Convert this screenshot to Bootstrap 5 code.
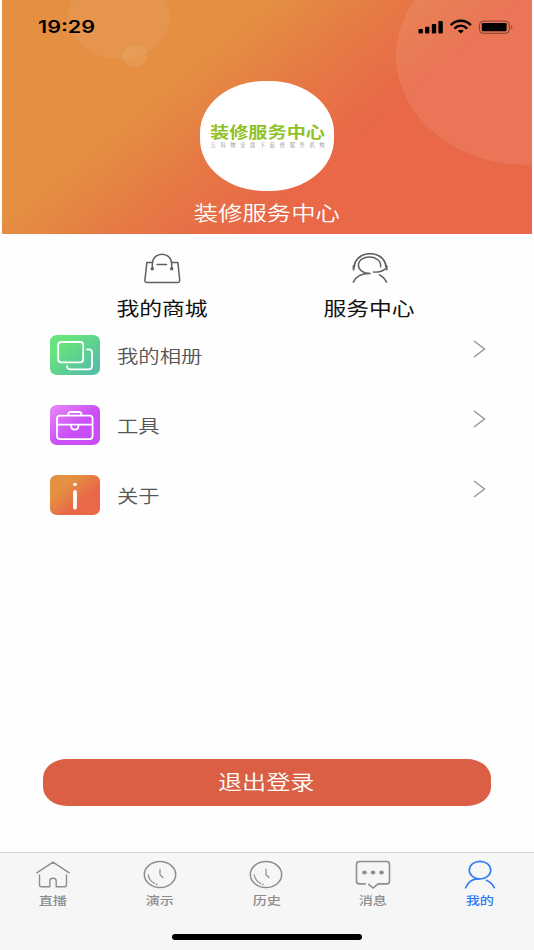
<!DOCTYPE html>
<html lang="zh-CN">
<head>
<meta charset="utf-8">
<meta name="viewport" content="width=device-width, initial-scale=1">
<title>我的</title>
<link href="https://cdn.jsdelivr.net/npm/bootstrap@5.3.0/dist/css/bootstrap.min.css" rel="stylesheet">
<style>
body{font-family:"Noto Sans CJK SC",sans-serif;background:#fefefe;height:950px;overflow:hidden}
svg{display:block;flex:none}
.wide{display:inline-block;transform:scaleX(1.2);line-height:1;white-space:nowrap}
.hero{height:234px;margin:0 2px;background:linear-gradient(140.2deg,#e48f42 33%,#e67a45 48%,#e86847 64%)}
.bubbles{left:0;top:0}
.statusbar{height:81px;padding:19px 18px 0 36px}
.clock{font:600 17px/17px Inter,sans-serif;color:#000;transform:scaleX(1.27);transform-origin:left}
.avatar{width:134px;height:110px;border-radius:64px/52px;background:#fff}
.username{font-size:20.3px;font-weight:350;margin-top:11px}
.quick{height:86px;padding:0 0 0 59px}
.quick-item{width:207px;padding-top:19px}
.quick-label{font-size:19px;color:#111;margin-top:14px}
.entry{height:70px;padding:0 48px 0 50px}
.tile{width:50px;height:40px;border-radius:7px/6px}
.tile-green{background:linear-gradient(140deg,#67e27c 25%,#56bfa6 85%)}
.tile-purple{background:linear-gradient(140deg,#e88af8,#c94ef6 55%)}
.tile-orange{background:linear-gradient(140deg,#e48f42 30%,#e86847 65%)}
.entry-label{font-size:17.8px;font-weight:350;color:#555;margin:1px 0 0 17px;transform-origin:left}
.chev{margin-bottom:12px}
.logout{height:47px;margin:0 43px 46px;border-radius:24px/19px;background:#da5f44;color:#fff;font-size:20.1px;font-weight:350}
.logout .wide{margin:3px 2px 0 0}
.logout:hover{background:#cf563c;color:#fff}
.tabs{height:98px;background:#f6f6f6;border-top:1px solid #d6d6d6}
.tab-link{width:106.6px;padding-top:6px;color:#8e8e8e;text-decoration:none}
.tab-link.on{color:#2f7cf6}
.tab-name{font-size:11.8px;font-weight:500;margin-top:4px}
.home-line{width:190px;height:6px;background:#000;margin-bottom:10px}
</style>
<script src="https://cdn.jsdelivr.net/npm/bootstrap@5.3.0/dist/js/bootstrap.bundle.min.js"></script>
</head>
<body class="d-flex flex-column">
<header class="hero position-relative overflow-hidden d-flex flex-column align-items-center">
  <svg class="bubbles position-absolute" width="530" height="234" fill="#fff"><ellipse cx="117" cy="17" rx="51" ry="42" fill-opacity=".06"/><ellipse cx="133" cy="56" rx="13" ry="11" fill-opacity=".08"/><ellipse cx="525" cy="56" rx="131" ry="109" fill-opacity=".09"/></svg>
  <div class="statusbar position-relative w-100 d-flex justify-content-between align-items-start">
    <span class="wide clock">19:29</span>
    <svg width="96" height="16" viewBox="0 0 96 16">
      <rect x=".5" y="10" width="4.4" height="4.4" rx="1"/><rect x="7" y="7.8" width="4.4" height="6.6" rx="1"/><rect x="13.8" y="5" width="4.4" height="9.4" rx="1"/><rect x="20.4" y="2" width="4.4" height="12.4" rx="1"/>
      <g fill="none" stroke="#000" stroke-width="2.3"><path d="M32.7 6.1C38.3.3 47.3.3 52.9 6.1"/><path d="M36.3 9.6C40.3 5.8 45.3 5.8 49.3 9.6"/></g><path d="M39.8 11.8Q42.8 9.6 45.8 11.8L42.8 14.5Z"/>
      <rect x="61.4" y="2.1" width="30" height="12.2" rx="4" fill="none" stroke="#000" stroke-opacity=".45"/><rect x="63.8" y="4.1" width="24.8" height="8.2" rx="1.2"/><path d="M93.4 6q2 2.2 0 4.4z" opacity=".5"/>
    </svg>
  </div>
  <div class="avatar position-relative d-flex align-items-center justify-content-center">
    <svg width="134" height="110" viewBox="0 0 134 110" font-family="Noto Sans CJK SC,sans-serif">
      <text x="10" y="57.2" font-size="15.4" font-weight="700" fill="#90c226" textLength="115" lengthAdjust="spacingAndGlyphs">装修服务中心</text>
      <text x="10.5" y="66.4" font-size="5.2" fill="#a0a0a0" textLength="114" lengthAdjust="spacing">万科物业旗下装修服务机构</text>
    </svg>
  </div>
  <div class="wide username position-relative text-white">装修服务中心</div>
</header>

<section class="quick d-flex">
  <div class="quick-item d-flex flex-column align-items-center">
    <svg width="38" height="31" viewBox="0 0 38 31" fill="none" stroke="#606060" stroke-width="1.5" stroke-linecap="round" stroke-linejoin="round"><path d="M8.3 15.7V11C8.3-2 27.7-2 27.7 11v4.7M13 11.4h9.5M8.1 9.4H2.9L.9 27q-.2 2.5 2.2 2.5h30.4q2.4 0 2.2-2.5L33.9 9.4h-6"/><circle cx="8.3" cy="15.8" r="1" fill="#606060"/><circle cx="27.7" cy="15.8" r="1" fill="#606060"/></svg>
    <span class="wide quick-label">我的商城</span>
  </div>
  <div class="quick-item d-flex flex-column align-items-center">
    <svg width="38" height="31" viewBox="0 0 38 31" fill="none" stroke="#606060" stroke-width="1.5" stroke-linecap="round"><path d="M3.2 14C4.6-3.7 33.6-3.7 35 14" stroke-width="1.7"/><path d="M2.6 13v3.6M35.6 13v3.6" stroke-width="2"/><path d="M29.6 13.8C31 1.4 7.8.8 7.4 12c0 5 4.7 8.6 11.8 8.6M22.4 19.1q7.5.3 11.5-3M2.3 29.2C5 23.5 10 20.6 18 20.6M28.5 21.8q5 2.7 7 7.4"/></svg>
    <span class="wide quick-label">服务中心</span>
  </div>
</section>

<main class="flex-grow-1">
  <div class="entry d-flex align-items-center">
    <div class="tile tile-green"><svg width="50" height="40" fill="none" stroke="#fff" stroke-width="1.8" stroke-linecap="round"><rect x="8.2" y="7" width="25" height="20.3" rx="3"/><path d="M37 14.3h1.7q3.3 0 3.3 3v14q0 3-3.3 3H20q-3 0-3-3.2"/></svg></div>
    <span class="wide entry-label">我的相册</span>
    <svg class="chev ms-auto" width="14" height="18" fill="none" stroke="#999" stroke-width="1.5"><path d="M2 1l10.5 8L2 17"/></svg>
  </div>
  <div class="entry d-flex align-items-center">
    <div class="tile tile-purple"><svg width="50" height="40" fill="none" stroke="#fff" stroke-width="1.8"><rect x="7" y="10.6" width="35.6" height="23.5" rx="3"/><path d="M18.3 10.5V9q0-2 2.4-2h8.2q2.4 0 2.4 2v1.5M7 19.6h35.6M21 20c0 6.2 7.6 6.2 7.6 0"/></svg></div>
    <span class="wide entry-label">工具</span>
    <svg class="chev ms-auto" width="14" height="18" fill="none" stroke="#999" stroke-width="1.5"><path d="M2 1l10.5 8L2 17"/></svg>
  </div>
  <div class="entry d-flex align-items-center">
    <div class="tile tile-orange"><svg width="50" height="40" fill="#fff"><ellipse cx="25" cy="9.4" rx="2" ry="1.7"/><rect x="23.1" y="15" width="3.8" height="19.5" rx="1.9"/></svg></div>
    <span class="wide entry-label">关于</span>
    <svg class="chev ms-auto" width="14" height="18" fill="none" stroke="#999" stroke-width="1.5"><path d="M2 1l10.5 8L2 17"/></svg>
  </div>
</main>

<button type="button" class="btn logout border-0 p-0 flex-shrink-0"><span class="wide">退出登录</span></button>

<nav class="tabs d-flex flex-column justify-content-between align-items-center flex-shrink-0">
  <div class="d-flex w-100">
    <a href="#" class="tab-link d-flex flex-column align-items-center"><svg width="36" height="31" fill="none" stroke="currentColor" stroke-width="1.4" stroke-linecap="round" stroke-linejoin="round"><path d="M1.8 13.8L18 3.2l16.2 10.6M4.5 16v10q0 1.7 2 1.7h8.3V22c0-3.6 6.4-3.6 6.4 0v5.7h8.3q2 0 2-1.7V16"/></svg><span class="wide tab-name">直播</span></a>
    <a href="#" class="tab-link d-flex flex-column align-items-center"><svg width="36" height="31" fill="none" stroke="currentColor" stroke-width="1.5" stroke-linecap="round"><ellipse cx="18" cy="15.6" rx="15.7" ry="13"/><path d="M18 10.2v5.5l3 2.8M6.2 15.8q1 5.8 6.4 8.7" stroke-width="1.2"/><path d="M14.5 25.6h.5" /></svg><span class="wide tab-name">演示</span></a>
    <a href="#" class="tab-link d-flex flex-column align-items-center"><svg width="36" height="31" fill="none" stroke="currentColor" stroke-width="1.5" stroke-linecap="round"><ellipse cx="18" cy="15.6" rx="15.7" ry="13"/><path d="M18 10.2v5.5l3 2.8M6.2 15.8q1 5.8 6.4 8.7" stroke-width="1.2"/><path d="M14.5 25.6h.5" /></svg><span class="wide tab-name">历史</span></a>
    <a href="#" class="tab-link d-flex flex-column align-items-center"><svg width="36" height="31" fill="none" stroke="currentColor" stroke-width="1.6" stroke-linecap="round"><path d="M10.2 24.9H4.5q-3 0-3-2.7V5.2q0-2.7 3-2.7h27q3 0 3 2.7v17q0 2.7-3 2.7h-8.3L18 29l-4.2-3.6"/><g fill="currentColor" stroke="none"><ellipse cx="9.5" cy="13.6" rx="2.3" ry="2"/><ellipse cx="18" cy="13.6" rx="2.3" ry="2"/><ellipse cx="26.5" cy="13.6" rx="2.3" ry="2"/></g></svg><span class="wide tab-name">消息</span></a>
    <a href="#" class="tab-link on d-flex flex-column align-items-center"><svg width="36" height="31" fill="none" stroke="currentColor" stroke-width="1.6" stroke-linecap="round"><ellipse cx="18" cy="11.2" rx="10.7" ry="8.8"/><path d="M3.6 28.7C6 23 10.7 19.8 17 19.9M24.5 21.3q5.5 2.4 7.8 7.4"/></svg><span class="wide tab-name">我的</span></a>
  </div>
  <div class="home-line rounded-pill"></div>
</nav>
</body>
</html>
